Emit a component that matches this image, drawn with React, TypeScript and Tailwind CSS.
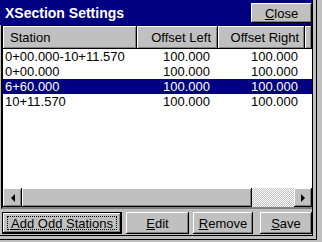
import React from 'react'

const raised =
  'bg-[#c0c0c0] shadow-[inset_-1px_-1px_0_#000,inset_1px_1px_0_#fff,inset_-2px_-2px_0_#808080]'

type Row = { station: string; left: string; right: string; selected?: boolean }

const rows: Row[] = [
  { station: '0+00.000-10+11.570', left: '100.000', right: '100.000' },
  { station: '0+00.000', left: '100.000', right: '100.000' },
  { station: '6+60.000', left: '100.000', right: '100.000', selected: true },
  { station: '10+11.570', left: '100.000', right: '100.000' },
]

function Btn({ label, hot, className }: { label: string; hot: number; className: string }) {
  return (
    <div className={`flex items-center justify-center ${raised} ${className}`}>
      <span>
        {label.slice(0, hot)}
        <span className="underline underline-offset-1">{label[hot]}</span>
        {label.slice(hot + 1)}
      </span>
    </div>
  )
}

export default function App() {
  return (
    <div className="h-[242px] w-[322px] overflow-hidden bg-[#c0c0c0] font-['Liberation_Sans',Arial,sans-serif] text-[13px] leading-none text-black">
      <div className="w-fit border-r border-b border-black pr-[3px] pb-[3px]">
        <div className="flex h-[235px] w-[312px] flex-col border-r border-b border-black box-content">
          {/* title bar */}
          <div className="flex h-[25px] items-start justify-between bg-[#000080] pt-[3px]">
            <span className="pl-[5px] pt-[3px] text-[14px] font-bold text-white">XSection Settings</span>
            <Btn label="Close" hot={0} className="h-[20px] w-[61px]" />
          </div>

          {/* list */}
          <div className="ml-[1px] flex h-[184px] flex-col border-t border-l-2 border-b-2 border-t-black border-l-black border-b-[#808080] bg-white">
            <div className="flex h-[23px]">
              <div className={`flex w-[134px] items-center pl-[7px] ${raised}`}>Station</div>
              <div className={`flex w-[81px] items-center justify-end pr-[7px] ${raised}`}>Offset Left</div>
              <div className={`flex w-[87px] items-center justify-end pr-[6px] ${raised}`}>Offset Right</div>
              <div className={`flex-1 ${raised}`} />
            </div>
            <div className="flex-1">
              {rows.map((r) => (
                <div
                  key={r.station}
                  className={`flex h-[15px] items-center ${r.selected ? 'bg-[#000080] text-white' : ''}`}
                >
                  <div className="w-[134px] pl-[2px]">{r.station}</div>
                  <div className="w-[81px] pr-[8px] text-right">{r.left}</div>
                  <div className="w-[87px] pr-[7px] text-right">{r.right}</div>
                </div>
              ))}
            </div>
            {/* horizontal scrollbar */}
            <div className="flex h-[19px]">
              <div className={`flex w-[19px] items-center justify-center ${raised}`}>
                <div className="h-0 w-0 border-y-[4px] border-r-[4px] border-y-transparent border-r-black" />
              </div>
              <div className={`w-[230px] ${raised}`} />
              <div className="flex-1 bg-[repeating-conic-gradient(#c0c0c0_0_25%,#fff_0_50%)] bg-[length:2px_2px]" />
              <div className={`flex w-[18px] items-center justify-center ${raised}`}>
                <div className="h-0 w-0 border-y-[4px] border-l-[4px] border-y-transparent border-l-black" />
              </div>
            </div>
          </div>

          {/* buttons */}
          <div className="mt-[3px] flex h-[22px]">
            <div className="ml-[2px] w-[120px] border border-black">
              <div className={`flex h-full items-center justify-center ${raised}`}>
                <div className="flex h-[14px] w-[110px] items-center justify-center border border-dotted border-black">
                  <span>
                    <span className="underline underline-offset-1">A</span>dd Odd Stations
                  </span>
                </div>
              </div>
            </div>
            <Btn label="Edit" hot={0} className="ml-[4px] w-[63px]" />
            <Btn label="Remove" hot={0} className="ml-[4px] w-[60px]" />
            <Btn label="Save" hot={0} className="ml-[7px] w-[52px]" />
          </div>
        </div>
      </div>
    </div>
  )
}
